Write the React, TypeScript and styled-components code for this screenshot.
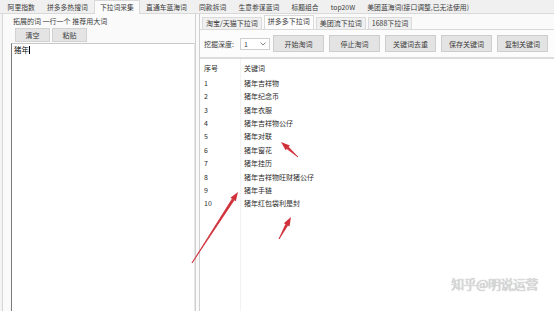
import React from "react";
import styled, { createGlobalStyle } from "styled-components";

const Global = createGlobalStyle`
  html, body {
    margin: 0;
    padding: 0;
    background: #f4f4f4;
  }
  * {
    box-sizing: border-box;
  }
`;

const Root = styled.div`
  position: relative;
  width: 554px;
  height: 311px;
  overflow: hidden;
  display: flex;
  flex-direction: column;
  background: #f4f4f4;
  font-family: "Noto Sans CJK SC", "Microsoft YaHei", sans-serif;
  font-size: 7px;
  color: #3a3a3a;
`;

const TopTabs = styled.div`
  height: 14px;
  display: flex;
  align-items: flex-end;
  padding-left: 2px;
  border-bottom: 1px solid #d9d9d9;
  background: #f0f0f0;
  font-size: 6.8px;
`;

const Tab = styled.div<{ $active?: boolean }>`
  height: ${(p) => (p.$active ? "14px" : "12px")};
  line-height: ${(p) => (p.$active ? "12px" : "11px")};
  padding: 0 4.6px;
  margin-right: 1px;
  background: ${(p) => (p.$active ? "#fbfbfb" : "#f0f0f0")};
  border: 1px solid ${(p) => (p.$active ? "#d9d9d9" : "transparent")};
  border-bottom: none;
  margin-bottom: ${(p) => (p.$active ? "-1px" : "0")};
  white-space: nowrap;
`;

const Body = styled.div`
  flex: 1;
  display: flex;
  min-height: 0;
  border-left: 1px solid #d6d6d6;
  margin-left: 2px;
  background: #fafafa;
`;

const LeftPane = styled.div`
  width: 193px;
  display: flex;
  flex-direction: column;
  padding: 2px 0 0 8px;
  border-right: 1px solid #d0d0d0;
`;

const GroupLabel = styled.div`
  height: 10px;
  line-height: 10px;
  padding-left: 2px;
  white-space: nowrap;
`;

const ButtonRow = styled.div`
  display: flex;
  gap: 2px;
  padding: 2px 0 1px 4px;
`;

const SmallButton = styled.div`
  width: 35px;
  height: 14px;
  line-height: 13px;
  text-align: center;
  background: #e4e4e4;
  border: 1px solid #d2d2d2;
`;

const TextArea = styled.div`
  flex: 1;
  background: #fff;
  border: 1px solid #c8c8c8;
  border-left: 1px solid #7a7a7a;
  border-right: 1px solid #e6e6e6;
  border-bottom: none;
  padding: 1px 2px;
  line-height: 10px;
  font-size: 7.5px;
  color: #111;
`;

const Caret = styled.span`
  display: inline-block;
  width: 1px;
  height: 8px;
  background: #000;
  vertical-align: -1px;
`;

const RightPane = styled.div`
  flex: 1;
  display: flex;
  flex-direction: column;
  margin-left: 3px;
  border-left: 1px solid #cfcfcf;
`;

const SubTabs = styled.div`
  height: 15px;
  display: flex;
  align-items: flex-end;
  padding-left: 2px;
  margin-top: 1px;
  border-bottom: 1px solid #d9d9d9;
`;

const SubTab = styled.div<{ $active?: boolean }>`
  height: ${(p) => (p.$active ? "14px" : "12px")};
  line-height: 11px;
  padding: 0 3px;
  margin-right: 2px;
  background: ${(p) => (p.$active ? "#fdfdfd" : "#f0f0f0")};
  border: 1px solid #dadada;
  border-bottom: none;
  white-space: nowrap;
`;

const Toolbar = styled.div`
  height: 29px;
  display: flex;
  align-items: center;
  padding-left: 4px;
  border-bottom: 2px solid #dcdcdc;
  background: #fcfcfc;
`;

const DepthLabel = styled.span`
  white-space: nowrap;
  margin-right: 6px;
`;

const Select = styled.div`
  width: 30px;
  height: 12px;
  display: flex;
  align-items: center;
  justify-content: space-between;
  padding: 0 3px;
  background: #fff;
  border: 1px solid #cfcfcf;
  color: #444;
`;

const ButtonGroup = styled.div`
  display: flex;
  gap: 5px;
  margin-left: 3px;
`;

const ToolButton = styled.div`
  width: 51px;
  height: 17px;
  line-height: 16px;
  text-align: center;
  white-space: nowrap;
  background: #e3e3e3;
  border: 1px solid #cdcdcd;
`;

const List = styled.div`
  flex: 1;
  position: relative;
  background: #fff;
  padding-top: 3px;
`;

const Row = styled.div<{ $head?: boolean }>`
  display: grid;
  grid-template-columns: 40px 1fr;
  height: 13.4px;
  line-height: 13px;
  padding-left: 4px;
  margin-bottom: ${(p) => (p.$head ? "1.5px" : "0")};
  color: #2a2a2a;
`;

const ColumnLine = styled.div`
  position: absolute;
  left: 40px;
  top: 0;
  bottom: 0;
  width: 1px;
  background: #f2f2f2;
`;

const Watermark = styled.div`
  position: absolute;
  right: 16px;
  bottom: 18px;
  font-size: 13px;
  color: #dcdcdc;
  letter-spacing: -0.5px;
  text-shadow: 0 0 1px #999;
`;

const Overlay = styled.svg`
  position: absolute;
  left: 0;
  top: 0;
  pointer-events: none;
`;

const topTabs = [
  "阿里指数",
  "拼多多热搜词",
  "下拉词采集",
  "直通车蓝海词",
  "同款拆词",
  "生意参谋蓝词",
  "标题组合",
  "top20W",
  "美团蓝海词(接口调整,已无法使用)",
];

const subTabs = ["淘宝/天猫下拉词", "拼多多下拉词", "美团流下拉词", "1688下拉词"];

const tools = ["开始淘词", "停止淘词", "关键词去重", "保存关键词", "复制关键词"];

const words = [
  "猪年吉祥物",
  "猪年纪念币",
  "猪年衣服",
  "猪年吉祥物公仔",
  "猪年对联",
  "猪年窗花",
  "猪年挂历",
  "猪年吉祥物旺财猪公仔",
  "猪年手链",
  "猪年红包袋利是封",
];

const Arrow = ({ x1, y1, x2, y2 }: { x1: number; y1: number; x2: number; y2: number }) => {
  const a = Math.atan2(y2 - y1, x2 - x1);
  const len = 9;
  const w = 3.2;
  const bx = x2 - len * Math.cos(a);
  const by = y2 - len * Math.sin(a);
  const px = -Math.sin(a) * w;
  const py = Math.cos(a) * w;
  return (
    <g>
      <path
        d={`M${x1} ${y1} L${bx + px * 0.35} ${by + py * 0.35} L${bx - px * 0.35} ${by - py * 0.35} Z`}
        fill="#d0303a"
        stroke="#d0303a"
        strokeWidth="0.8"
        strokeLinejoin="round"
      />
      <path d={`M${x2} ${y2} L${bx + px} ${by + py} L${bx - px} ${by - py} Z`} fill="#d0303a" />
    </g>
  );
};

const App = () => {
  return (
    <Root>
      <Global />
      <TopTabs>
        {topTabs.map((t) => (
          <Tab key={t} $active={t === "下拉词采集"}>
            {t}
          </Tab>
        ))}
      </TopTabs>
      <Body>
        <LeftPane>
          <GroupLabel>拓展的词 一行一个 推荐用大词</GroupLabel>
          <ButtonRow>
            <SmallButton>清空</SmallButton>
            <SmallButton>粘贴</SmallButton>
          </ButtonRow>
          <TextArea>
            猪年
            <Caret />
          </TextArea>
        </LeftPane>
        <RightPane>
          <SubTabs>
            {subTabs.map((t) => (
              <SubTab key={t} $active={t === "拼多多下拉词"}>
                {t}
              </SubTab>
            ))}
          </SubTabs>
          <Toolbar>
            <DepthLabel>挖掘深度:</DepthLabel>
            <Select>
              <span>1</span>
              <svg width="6" height="4" viewBox="0 0 6 4">
                <path d="M0.5 0.5 L3 3 L5.5 0.5" fill="none" stroke="#666" strokeWidth="0.8" />
              </svg>
            </Select>
            <ButtonGroup>
              {tools.map((t) => (
                <ToolButton key={t}>{t}</ToolButton>
              ))}
            </ButtonGroup>
          </Toolbar>
          <List>
            <ColumnLine />
            <Row $head>
              <span>序号</span>
              <span>关键词</span>
            </Row>
            {words.map((w, i) => (
              <Row key={w}>
                <span>{i + 1}</span>
                <span>{w}</span>
              </Row>
            ))}
            <Watermark>知乎@明说运营</Watermark>
          </List>
        </RightPane>
      </Body>
      <Overlay width="554" height="311" viewBox="0 0 554 311">
        <Arrow x1={192} y1={263} x2={238} y2={192} />
        <Arrow x1={298} y1={157} x2={281} y2={142} />
        <Arrow x1={279} y1={239} x2={291} y2={217} />
      </Overlay>
    </Root>
  );
};

export default App;
